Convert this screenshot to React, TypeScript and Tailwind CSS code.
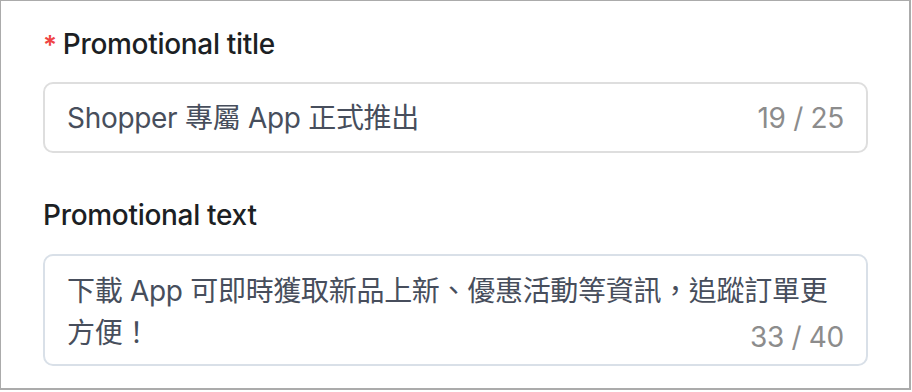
export default function App() {
  const font = {
    fontFamily:
      '"Inter", "Noto Sans CJK TC", "Noto Sans CJK SC", sans-serif',
  };
  return (
    <div
      style={font}
      className="w-[911px] h-[390px] bg-white border border-[#ababab] border-r-2 border-b-2 pl-[42px] pt-[22px]"
    >
      <div className="flex items-center h-[42px] text-[28px] font-medium text-[#1c1f24] tracking-[-0.3px]">
        <span className="text-[#ef4444] text-[26px] leading-none self-start mt-[9px] mr-[6px] font-semibold">*</span>
        <span>Promotional title</span>
      </div>
      <div className="mt-[17px] w-[825px] h-[71px] rounded-[10px] border-2 border-[#dedede] flex items-center justify-between pl-[22px] pr-[22px] text-[28px]">
        <span className="text-[#474e5c] tracking-[-0.3px]">Shopper 專屬 App 正式推出</span>
        <span className="text-[#8c8c8c] tracking-[-0.3px]">19 / 25</span>
      </div>
      <div className="mt-[41px] h-[42px] flex items-center text-[28px] font-medium text-[#1c1f24] tracking-[-0.3px]">
        Promotional text
      </div>
      <div className="mt-[18px] w-[825px] h-[112px] rounded-[10px] border-2 border-[#d9e0e8] pl-[22px] pr-[22px] pt-[14px] text-[28px] leading-[42px] flex flex-col">
        <div className="text-[#474e5c] tracking-[-0.3px]">
          下載 App 可即時獲取新品上新、優惠活動等資訊，追蹤訂單更
          <br />
          方便！
        </div>
        <div className="-mt-[38px] self-end text-[#8c8c8c] tracking-[-0.3px]">33 / 40</div>
      </div>
    </div>
  );
}
